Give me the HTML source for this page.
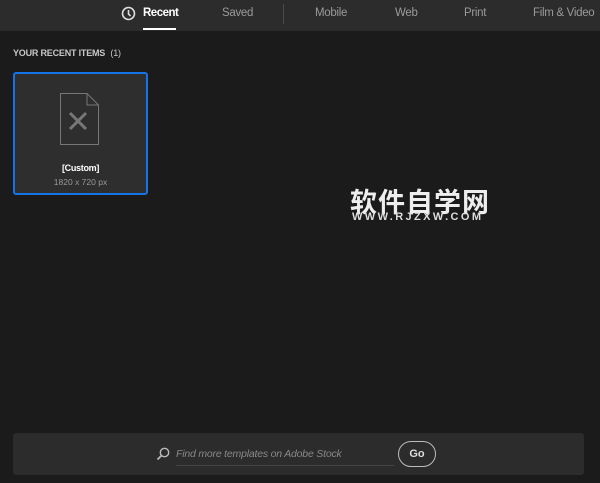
<!DOCTYPE html><html><head><style>
body{margin:0;width:600px;height:483px;background:#1b1b1b;font-family:"Liberation Sans",sans-serif;position:relative;overflow:hidden}
.top{position:absolute;left:0;top:0;width:600px;height:31px;background:#2c2c2c}
.t{position:absolute;top:7px;font-size:11.5px;color:#9a9a9a;white-space:nowrap;letter-spacing:-0.3px}
</style></head><body>
<div class="top">
<svg style="position:absolute;left:121px;top:6px" width="15" height="15"><circle cx="7.5" cy="7.5" r="6" fill="none" stroke="#ddd" stroke-width="1.6"/><path d="M7.5 4v4l2 2" stroke="#ddd" stroke-width="1.6" fill="none"/></svg>
<div class="t" style="left:143px;color:#fff;font-weight:bold;letter-spacing:-0.5px">Recent</div>
<div style="position:absolute;left:143px;top:28px;width:33px;height:2px;background:#fff"></div>
<div class="t" style="left:222px">Saved</div>
<div style="position:absolute;left:283px;top:4px;width:1px;height:20px;background:#4a4a4a"></div>
<div class="t" style="left:315px">Mobile</div>
<div class="t" style="left:395px">Web</div>
<div class="t" style="left:464px">Print</div>
<div class="t" style="left:533px">Film &amp; Video</div>
</div>
<div style="position:absolute;left:13px;top:48px;font-size:9px;font-weight:bold;color:#c8c8c8;letter-spacing:-0.2px">YOUR RECENT ITEMS <span style="font-weight:normal;margin-left:3px">(1)</span></div>
<div style="position:absolute;left:13px;top:72px;width:131px;height:119px;border:2px solid #1473e6;border-radius:3px;background:#2e2e2e">
<svg style="position:absolute;left:45px;top:19px" width="44" height="56"><path d="M0.5 0.5H27L38.5 12V51.5H0.5Z M27 0.5V12H38.5" fill="none" stroke="#777"/><path d="M10 20L26 36M26 20L10 36" stroke="#777" stroke-width="3" fill="none"/></svg>
<div style="position:absolute;left:0;width:131px;top:89px;text-align:center;font-size:9px;color:#fff;font-weight:bold;letter-spacing:-0.3px">[Custom]</div>
<div style="position:absolute;left:0;width:131px;top:103px;text-align:center;font-size:8.5px;color:#999">1820 x 720 px</div>
</div>
<div style="position:absolute;left:350px;top:186px;font-size:27px;font-weight:bold;color:#eee;font-family:'Noto Sans CJK SC',sans-serif;letter-spacing:1px;line-height:30px">软件自学网</div>
<div style="position:absolute;left:352px;top:211px;font-size:11px;font-weight:bold;color:#ddd;letter-spacing:2.4px">WWW.RJZXW.COM</div>
<div style="position:absolute;left:13px;top:433px;width:571px;height:42px;background:#2c2c2c;border-radius:3px">
<svg style="position:absolute;left:143px;top:14px" width="14" height="14"><circle cx="8.5" cy="5.5" r="4.2" fill="none" stroke="#bbb" stroke-width="1.4"/><path d="M5.5 8.5L1.5 12.5" stroke="#bbb" stroke-width="1.8"/></svg>
<div style="position:absolute;left:163px;top:15px;font-size:10.5px;font-style:italic;color:#888;letter-spacing:-0.2px">Find more templates on Adobe Stock</div>
<div style="position:absolute;left:163px;top:32px;width:218px;height:1px;background:#444"></div>
<div style="position:absolute;left:385px;top:8px;width:36px;height:24px;border:1.5px solid #bbb;border-radius:13px;color:#ddd;font-size:11px;font-weight:bold;text-align:center;line-height:24px">Go</div>
</div>
</body></html>
